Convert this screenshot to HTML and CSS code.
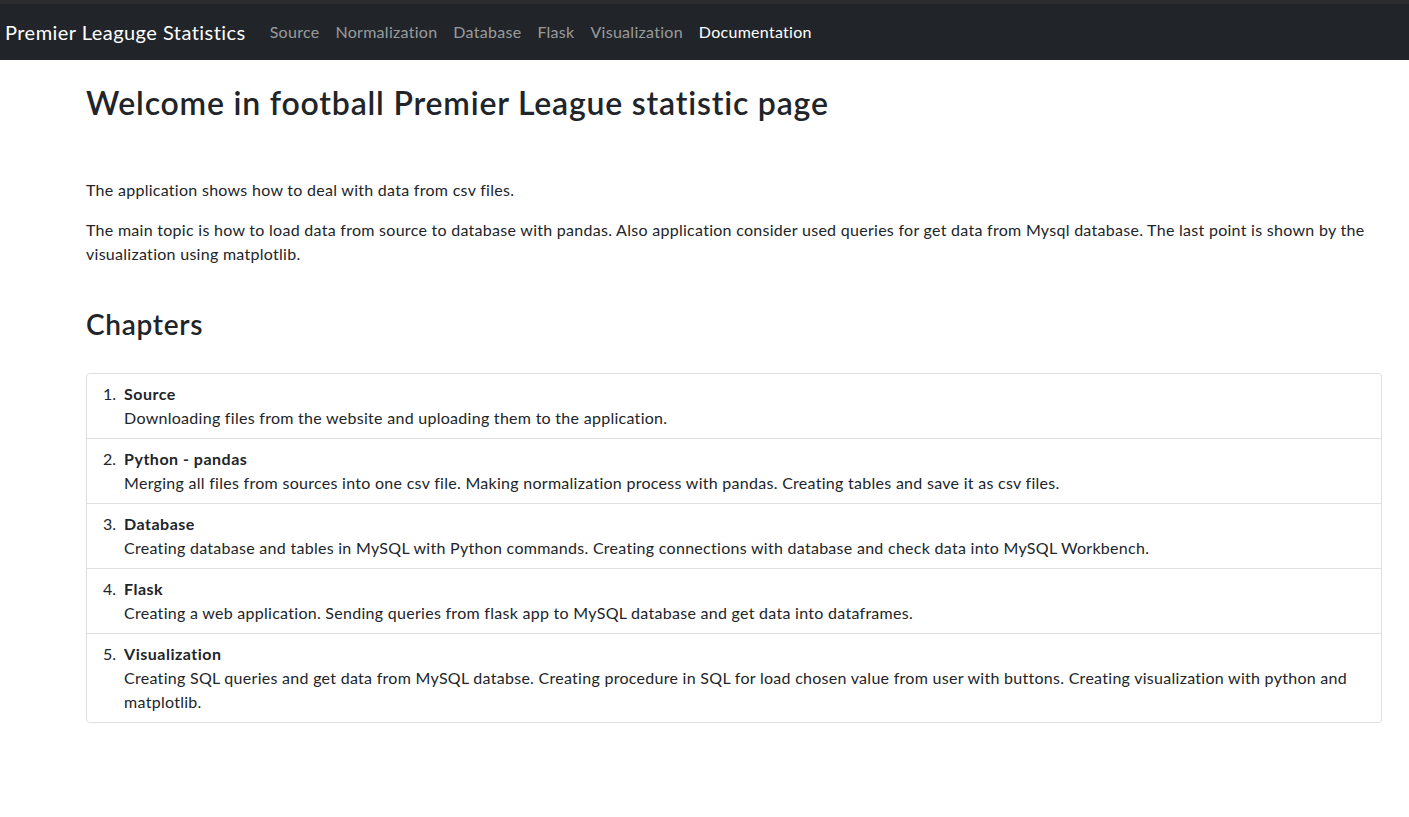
FILE: index.html
```html
<!DOCTYPE html>
<html lang="en">
<head>
<meta charset="utf-8">
<title>Premier Leaguge Statistics</title>
<link rel="stylesheet" href="styles.css">
</head>
<body>
<div class="topstrip"></div>
<nav class="navbar">
  <a class="brand" href="#">Premier Leaguge Statistics</a>
  <ul class="nav">
    <li><a class="nav-link" href="#">Source</a></li>
    <li><a class="nav-link" href="#">Normalization</a></li>
    <li><a class="nav-link" href="#">Database</a></li>
    <li><a class="nav-link" href="#">Flask</a></li>
    <li><a class="nav-link" href="#">Visualization</a></li>
    <li><a class="nav-link active" href="#">Documentation</a></li>
  </ul>
</nav>
<main class="content">
  <h1 class="title">Welcome in football Premier League statistic page</h1>
  <p class="lead-p">The application shows how to deal with data from csv files.</p>
  <p>The main topic is how to load data from source to database with pandas. Also application consider used queries for get data from Mysql database. The last point is shown by the visualization using matplotlib.</p>
  <h2 class="chapters">Chapters</h2>
  <ol class="list-group">
    <li class="item"><div class="item-body"><div class="item-title">Source</div>Downloading files from the website and uploading them to the application.</div></li>
    <li class="item"><div class="item-body"><div class="item-title">Python - pandas</div>Merging all files from sources into one csv file. Making normalization process with pandas. Creating tables and save it as csv files.</div></li>
    <li class="item"><div class="item-body"><div class="item-title">Database</div>Creating database and tables in MySQL with Python commands. Creating connections with database and check data into MySQL Workbench.</div></li>
    <li class="item"><div class="item-body"><div class="item-title">Flask</div>Creating a web application. Sending queries from flask app to MySQL database and get data into dataframes.</div></li>
    <li class="item"><div class="item-body"><div class="item-title">Visualization</div>Creating SQL queries and get data from MySQL databse. Creating procedure in SQL for load chosen value from user with buttons. Creating visualization with python and matplotlib.</div></li>
  </ol>
</main>
</body>
</html>
```
FILE: styles.css
```css
* { box-sizing: border-box; }
html, body { margin: 0; padding: 0; }
body {
  font-family: "Lato", "Liberation Sans", sans-serif;
  font-size: 16px;
  line-height: 24px;
  letter-spacing: 0.28px;
  color: #212529;
  background: #fff;
}
.topstrip { height: 4px; background: #2c2c2e; }
.navbar {
  display: flex;
  align-items: center;
  height: 56px;
  background: #212529;
  padding: 0 0 0 5px;
}
.brand {
  color: #fff;
  font-size: 20px;
  letter-spacing: 0.46px;
  text-decoration: none;
  margin-right: 16px;
  line-height: 30px;
}
.nav { display: flex; list-style: none; margin: 0; padding: 0; }
.nav-link {
  display: block;
  padding: 8px;
  color: rgba(255,255,255,.55);
  text-decoration: none;
}
.nav-link.active { color: #fff; }
.content { padding: 0 27px 0 86px; }
.title {
  font-size: 32px;
  font-weight: 600;
  line-height: 38px;
  letter-spacing: 0.8px;
  margin: 24px 0 0;
}
.lead-p { margin-top: 56px; }
p { margin: 0 0 16px; }
.chapters {
  font-size: 28px;
  font-weight: 600;
  line-height: 34px;
  letter-spacing: 0.7px;
  margin: 41px 0 32px;
}
.list-group {
  list-style: none;
  margin: 0;
  padding: 0;
  border: 1px solid #dfdfdf;
  border-radius: 4px;
  counter-reset: section;
}
.item {
  display: flex;
  padding: 8px 16px;
  counter-increment: section;
}
.item + .item { border-top: 1px solid #dfdfdf; }
.item::before { content: counter(section) "."; letter-spacing: 0; }
.item-body { margin-left: 8px; }
.item-title { font-weight: 700; letter-spacing: 0.5px; }
```
